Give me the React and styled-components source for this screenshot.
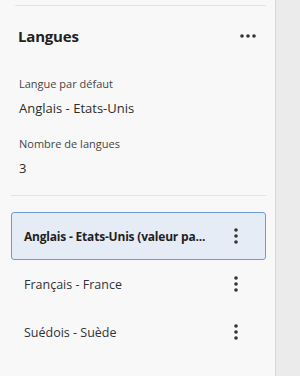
import React from 'react'
import styled, { createGlobalStyle } from 'styled-components'

const GlobalStyle = createGlobalStyle`
  html, body {
    margin: 0;
    padding: 0;
    background: #ebebeb;
  }
  * { box-sizing: border-box; }
`

const Page = styled.div`
  display: flex;
  width: 300px;
  height: 376px;
  font-family: "Open Sans", "Noto Sans", sans-serif;
  color: #2c2c2c;
`

const Panel = styled.div`
  width: 276px;
  height: 100%;
  background: #f8f8f8;
  border-right: 1px solid #d6d6d6;
  padding: 5px 9px 0 11px;
`

const Rule = styled.div`
  height: 1px;
  background: #e4e4e4;
  margin: ${p => p.$margin};
`

const Header = styled.div`
  display: flex;
  align-items: center;
  justify-content: space-between;
  padding: 0 10px 0 7px;
  margin-top: 20px;
`

const Title = styled.h2`
  margin: 0;
  font-size: 15px;
  font-weight: 700;
  color: #222;
  letter-spacing: -0.2px;
`

const Field = styled.div`
  padding-left: 8px;
  margin-top: ${p => p.$top}px;
`

const Label = styled.div`
  font-size: 11px;
  color: #464646;
  line-height: 14px;
`

const Value = styled.div`
  font-size: 13px;
  color: #2c2c2c;
  margin-top: 8px;
  line-height: 18px;
`

const List = styled.div`
  display: flex;
  flex-direction: column;
`

const Item = styled.div`
  display: flex;
  align-items: center;
  justify-content: space-between;
  height: 48px;
  padding: 0 27px 0 12px;
  border: 1px solid ${p => (p.$selected ? '#6f9bd3' : 'transparent')};
  border-radius: 3px;
  background: ${p => (p.$selected ? '#e6ecf6' : 'transparent')};
  font-size: ${p => (p.$selected ? '12px' : '12.5px')};
  letter-spacing: ${p => (p.$selected ? '-0.2px' : '0')};
  font-weight: ${p => (p.$selected ? 700 : 400)};
  color: ${p => (p.$selected ? '#1f1f1f' : '#333')};
`

const Name = styled.span`
  white-space: nowrap;
`

const Dots = ({ horizontal }) => (
  <svg width={horizontal ? 16 : 4} height={horizontal ? 4 : 16} viewBox={horizontal ? '0 0 16 4' : '0 0 4 16'}>
    {[2, 8, 14].map(c =>
      horizontal
        ? <circle key={c} cx={c} cy="2" r="1.8" fill="#333" />
        : <circle key={c} cx="2" cy={c} r="1.8" fill="#333" />
    )}
  </svg>
)

const langs = [
  { name: 'Anglais - Etats-Unis (valeur pa...', selected: true },
  { name: 'Français - France' },
  { name: 'Suédois - Suède' },
]

export default function App() {
  return (
    <>
      <GlobalStyle />
      <Page>
        <Panel>
          <Rule $margin="0 0 0 4px" />
          <Header>
            <Title>Langues</Title>
            <Dots horizontal />
          </Header>
          <Field $top={31}>
            <Label>Langue par défaut</Label>
            <Value>Anglais - Etats-Unis</Value>
          </Field>
          <Field $top={20}>
            <Label>Nombre de langues</Label>
            <Value>3</Value>
          </Field>
          <Rule $margin="18px 0 16px" />
          <List>
            {langs.map(l => (
              <Item key={l.name} $selected={l.selected}>
                <Name>{l.name}</Name>
                <Dots />
              </Item>
            ))}
          </List>
        </Panel>
      </Page>
    </>
  )
}
